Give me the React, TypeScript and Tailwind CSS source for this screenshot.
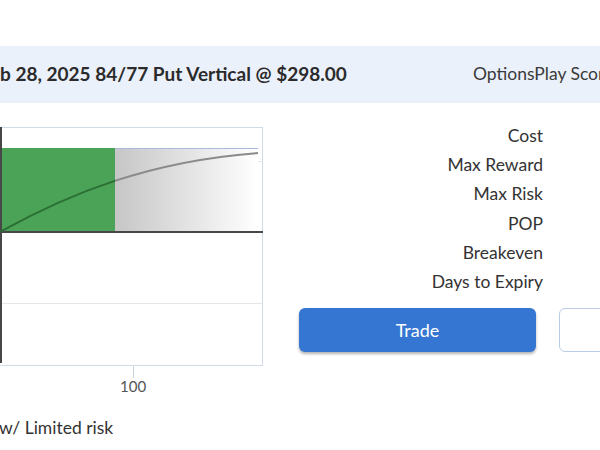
import React from 'react';

const rows = ['Cost', 'Max Reward', 'Max Risk', 'POP', 'Breakeven', 'Days to Expiry'];

const PayoffChart: React.FC = () => (
  <svg width="263" height="266" viewBox="0 0 263 266" className="block">
    <defs>
      <linearGradient id="lossFade" x1="0" x2="1" y1="0" y2="0">
        <stop offset="0" stopColor="#c6c6c6" />
        <stop offset="1" stopColor="#ffffff" />
      </linearGradient>
      <clipPath id="leftPart">
        <rect x="0" y="0" width="115" height="239" />
      </clipPath>
      <clipPath id="rightPart">
        <rect x="115" y="0" width="148" height="239" />
      </clipPath>
    </defs>
    {/* frame */}
    <rect x="-10" y="0.5" width="272.5" height="238" fill="#fff" stroke="#cfdbe7" />
    {/* grid */}
    <line x1="0" x2="262" y1="34.5" y2="34.5" stroke="#e3e7ec" />
    <line x1="0" x2="262" y1="176.5" y2="176.5" stroke="#e3e7ec" />
    {/* profit / loss areas */}
    <rect x="0" y="21" width="115" height="84" fill="#4aa356" />
    <rect x="115" y="21" width="143" height="84" fill="url(#lossFade)" />
    <line x1="115" x2="258" y1="21.5" y2="21.5" stroke="#a9bbdc" />
    {/* zero line */}
    <line x1="0" x2="263" y1="105" y2="105" stroke="#474747" strokeWidth="2" />
    {/* y axis */}
    <line x1="1" x2="1" y1="0" y2="236" stroke="#474747" strokeWidth="2" />
    {/* curve */}
    <path d="M0 105 C 70 66, 150 34, 258 26" fill="none" stroke="#2c6e34" strokeWidth="2" clipPath="url(#leftPart)" />
    <path d="M0 105 C 70 66, 150 34, 258 26" fill="none" stroke="#8a8a8a" strokeWidth="2" clipPath="url(#rightPart)" />
    {/* tick */}
    <line x1="133.5" x2="133.5" y1="239" y2="251" stroke="#c9d3de" />
  </svg>
);

export default function App() {
  return (
    <div className="w-[600px] h-[450px] overflow-hidden bg-white font-['Lato',sans-serif] text-[#333]">
      <div className="h-[46px]" />

      {/* Strategy header */}
      <div className="h-[57px] bg-[#ebf1fb] flex items-center">
        <div className="w-[473px] shrink-0 overflow-hidden">
          <p className="ml-[-20px] whitespace-nowrap text-[19px] font-bold text-[#2b2b2b]">
            Feb 28, 2025 84/77 Put Vertical @ $298.00
          </p>
        </div>
        <p className="whitespace-nowrap text-[17.5px] text-[#3a3a3a]">OptionsPlay Score</p>
      </div>

      <div className="flex mt-[24px]">
        {/* chart */}
        <div className="w-[263px] shrink-0">
          <PayoffChart />
          <p className="mt-[-18px] w-[263px] pl-[120px] text-[15px] text-[#555]">100</p>
        </div>

        {/* details */}
        <div className="ml-[36px] w-[320px] shrink-0 mt-[-6px]">
          <div className="w-[244px] flex flex-col items-end">
            {rows.map((r) => (
              <div key={r} className="h-[29.2px] leading-[29.2px] text-[17.5px] whitespace-nowrap">
                {r}
              </div>
            ))}
          </div>
          <div className="flex gap-[23px] mt-[12px]">
            <button className="w-[237px] h-[44px] shrink-0 rounded-md bg-[#3476d1] text-white text-[18px] shadow-[0_2px_3px_rgba(0,0,0,0.3)]">
              Trade
            </button>
            <button className="w-[120px] h-[44px] shrink-0 rounded-md border border-[#b9cbe6] bg-white" />
          </div>
        </div>
      </div>

      <p className="mt-[17px] ml-[-1px] text-[17.5px] whitespace-nowrap">w/ Limited risk</p>
    </div>
  );
}
